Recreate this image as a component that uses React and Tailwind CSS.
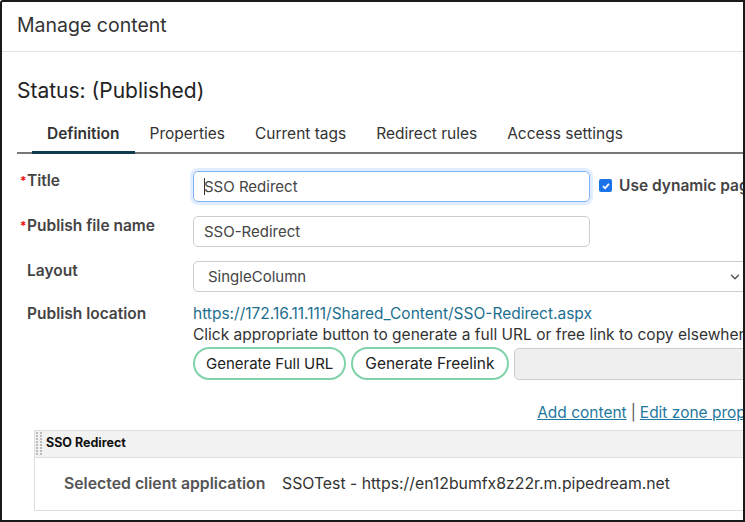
import { ChevronDown } from "lucide-react";

const font = { fontFamily: "Inter, 'Noto Sans', sans-serif" };

function Label({ required, children }) {
  return (
    <div className="w-[176px] shrink-0 pl-[3px] text-[15.5px] font-semibold text-[#444] flex items-start">
      <span className="w-[7px] text-[#e00] text-[12px] leading-[20px]">{required ? "*" : ""}</span>
      <span className="leading-[20px]">{children}</span>
    </div>
  );
}

export default function App() {
  const tabs = ["Definition", "Properties", "Current tags", "Redirect rules", "Access settings"];

  return (
    <div
      className="w-[745px] h-[522px] overflow-hidden bg-white border-2 border-[#1a1a1a] rounded-tl-[3px]"
      style={font}
    >
      {/* header */}
      <div className="h-[50px] border-b border-[#e2e2e2] flex items-center px-[15px]">
        <h1 className="text-[19.5px] text-[#333] -mt-[1px]">Manage content</h1>
      </div>

      <div className="w-[800px] pl-[15px]">
        <h2 className="mt-[25px] text-[21px] leading-[28px] text-[#222]">Status: (Published)</h2>

        {/* tabs */}
        <div className="mt-[13px] border-b-2 border-[#777] flex pl-[15px]">
          {tabs.map((t, i) => (
            <div
              key={t}
              className={
                i === 0
                  ? "px-[15px] pt-[4px] pb-[6px] text-[15.5px] font-semibold text-[#333] border-b-[3px] border-[#0e3b4d] -mb-[2px]"
                  : "px-[15px] pt-[4px] pb-[6px] text-[15.5px] text-[#333] border-b-[3px] border-transparent -mb-[2px]"
              }
            >
              {t}
            </div>
          ))}
        </div>

        {/* form */}
        <div className="mt-[17px] flex flex-col gap-[14px]">
          <div className="flex items-start">
            <Label required>Title</Label>
            <div className="w-[397px] h-[31px] rounded-[5px] border border-[#7fb3f5] shadow-[0_0_0_3px_rgba(13,110,253,0.12)] flex items-center pl-[10px] text-[15px] text-[#444]">
              <span className="w-px h-[17px] bg-[#333] -mr-px"></span>
              SSO Redirect
            </div>
            <div className="ml-[9px] mt-[3px] flex items-center gap-[7px]">
              <span className="w-[13px] h-[13px] rounded-[2px] bg-[#1a73e8] flex items-center justify-center">
                <svg width="10" height="10" viewBox="0 0 10 10">
                  <path d="M2 5.2 L4.1 7.3 L8 2.8" stroke="white" strokeWidth="1.8" fill="none" />
                </svg>
              </span>
              <span className="text-[15.5px] font-semibold text-[#444] whitespace-nowrap">Use dynamic page</span>
            </div>
          </div>

          <div className="flex items-start">
            <Label required>Publish file name</Label>
            <div className="w-[397px] h-[31px] rounded-[5px] border border-[#ccc] flex items-center pl-[10px] text-[15px] text-[#444]">
              SSO-Redirect
            </div>
          </div>

          <div className="flex items-start">
            <Label>Layout</Label>
            <div className="w-[556px] h-[31px] rounded-[5px] border border-[#ccc] flex items-center justify-between pl-[14px] pr-[6px] text-[15px] text-[#444]">
              <span>SingleColumn</span>
              <ChevronDown size={14} strokeWidth={2.5} className="text-[#555]" />
            </div>
          </div>

          <div className="flex items-start -mt-[3px]">
            <div className="pt-[1px]">
              <Label>Publish location</Label>
            </div>
            <div className="flex flex-col">
              <a className="text-[15.5px] leading-[22px] text-[#1d6f8f]">
                https://172.16.11.111/Shared_Content/SSO-Redirect.aspx
              </a>
              <div className="text-[15.5px] leading-[20px] text-[#333] whitespace-nowrap">
                Click appropriate button to generate a full URL or free link to copy elsewhere.
              </div>
              <div className="mt-[2px] flex items-center gap-[5px]">
                <button className="h-[33px] px-[11px] rounded-full border-2 border-[#80d3a9] text-[15px] text-[#222] whitespace-nowrap">
                  Generate Full URL
                </button>
                <button className="h-[33px] px-[12px] rounded-full border-2 border-[#80d3a9] text-[15.5px] text-[#222] whitespace-nowrap">
                  Generate Freelink
                </button>
                <div className="w-[260px] h-[32px] rounded-[5px] border border-[#ccc] bg-[#efefef]"></div>
              </div>
            </div>
          </div>
        </div>

        {/* zone */}
        <div className="mt-[21px] flex justify-end pr-[15px] text-[15.5px] text-[#1f77a0] whitespace-nowrap">
          <a className="underline">Add content</a>
          <span className="text-[#555] px-[4px]">|</span>
          <a className="underline">Edit zone properties</a>
        </div>

        <div className="mt-[5px] ml-[17px] border border-[#ddd]">
          <div className="h-[27px] bg-[#f2f2f2] border-b border-[#ddd] flex items-center">
            <div className="w-[6px] h-[23px] ml-[1px] grid grid-cols-2 gap-[1px] content-center">
              {Array.from({ length: 16 }).map((_, i) => (
                <span key={i} className="w-[2px] h-[2px] bg-[#bbb]"></span>
              ))}
            </div>
            <span className="ml-[4px] text-[12.5px] font-bold text-[#111]">SSO Redirect</span>
          </div>
          <div className="h-[52px] flex items-center pl-[29px] text-[15.8px]">
            <span className="w-[218px] font-semibold text-[#555]">Selected client application</span>
            <span className="text-[#333]">SSOTest - https://en12bumfx8z22r.m.pipedream.net</span>
          </div>
        </div>
      </div>
    </div>
  );
}
